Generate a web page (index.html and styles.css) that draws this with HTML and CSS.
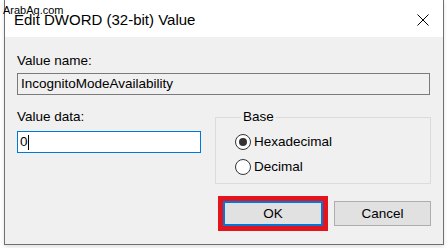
FILE: index.html
```html
<!DOCTYPE html>
<html>
<head>
<meta charset="utf-8">
<link rel="stylesheet" href="styles.css">
</head>
<body>
<div class="window">
  <div class="titlebar">
    <span class="title">Edit DWORD (32-bit) Value</span>
    <svg class="close" width="12" height="12" viewBox="0 0 12 12"><path d="M0.5 0.5 L11.5 11.5 M11.5 0.5 L0.5 11.5" stroke="#000" stroke-width="1" fill="none"/></svg>
  </div>
  <div class="content">
    <div class="label">Value name:</div>
    <div class="field name-field">IncognitoModeAvailability</div>
    <div class="row">
      <div class="data-col">
        <div class="label">Value data:</div>
        <div class="field data-field">0<span class="caret"></span></div>
      </div>
      <fieldset class="base">
        <legend>Base</legend>
        <div class="radio-row"><span class="radio checked"></span><span>Hexadecimal</span></div>
        <div class="radio-row"><span class="radio"></span><span>Decimal</span></div>
      </fieldset>
    </div>
    <div class="buttons">
      <div class="btn ok">OK</div>
      <div class="btn cancel">Cancel</div>
    </div>
  </div>
</div>
<div class="watermark">ArabAq.com</div>
</body>
</html>
```

FILE: styles.css
```css
html, body {
  margin: 0;
  padding: 0;
  background: #ffffff;
  font-family: "Liberation Sans", Arial, sans-serif;
  color: #000;
}
body {
  width: 447px;
  height: 248px;
  overflow: hidden;
  position: relative;
}
.window {
  margin-left: 4px;
  width: 438px;
  height: 244px;
  border: 1px solid #707070;
  border-top: none;
  background: #f0f0f0;
  box-shadow: 0 2px 4px rgba(0,0,0,0.12);
  display: flex;
  flex-direction: column;
}
.titlebar {
  height: 37px;
  background: #ffffff;
  display: flex;
  align-items: center;
  padding: 2px 14px 0 9px;
  box-sizing: border-box;
  justify-content: space-between;
}
.title {
  font-size: 15px;
}
.close {
  display: block;
}
.content {
  padding: 16px 12px 0 12px;
  font-size: 13.5px;
}
.label {
  line-height: 16px;
  height: 16px;
}
.field {
  box-sizing: border-box;
  height: 22px;
  border: 1px solid #7a7a7a;
  padding: 0 3px;
  line-height: 20px;
  display: flex;
  align-items: center;
}
.name-field {
  margin-top: 4px;
  width: 413px;
  background: #f0f0f0;
}
.row {
  margin-top: 14px;
  display: flex;
  justify-content: space-between;
  align-items: flex-start;
}
.data-col {
  width: 184px;
}
.data-field {
  margin-top: 6px;
  background: #ffffff;
  border-color: #0078d7;
  padding-left: 2px;
}
.caret {
  display: inline-block;
  width: 1px;
  height: 15px;
  background: #000;
  margin-left: 0px;
}
.base {
  margin: 0;
  width: 216px;
  box-sizing: border-box;
  height: 75px;
  border: 1px solid #dcdcdc;
  padding: 4px 0 0 19px;
  min-width: 0;
}
.base legend {
  margin-left: 6px;
  padding: 0 2px;
  line-height: 16px;
}
.radio-row {
  display: flex;
  align-items: center;
  height: 25px;
  gap: 3px;
}
.radio {
  width: 16px;
  height: 16px;
  box-sizing: border-box;
  border: 1px solid #333333;
  border-radius: 50%;
  background: #ffffff;
  display: flex;
  align-items: center;
  justify-content: center;
}
.radio.checked::after {
  content: "";
  width: 8px;
  height: 8px;
  border-radius: 50%;
  background: #333333;
}
.buttons {
  margin-top: 17px;
  display: flex;
  justify-content: flex-end;
  gap: 11px;
}
.btn {
  box-sizing: border-box;
  height: 25px;
  background: #e1e1e1;
  border: 1px solid #adadad;
  display: flex;
  align-items: center;
  justify-content: center;
}
.ok {
  width: 100px;
  border: 2px solid #0078d7;
  outline: 5px solid #e3141e;
}
.cancel {
  width: 97px;
}
.watermark {
  position: absolute;
  left: 3px;
  top: 4px;
  font-size: 11px;
  color: #000;
}
```
